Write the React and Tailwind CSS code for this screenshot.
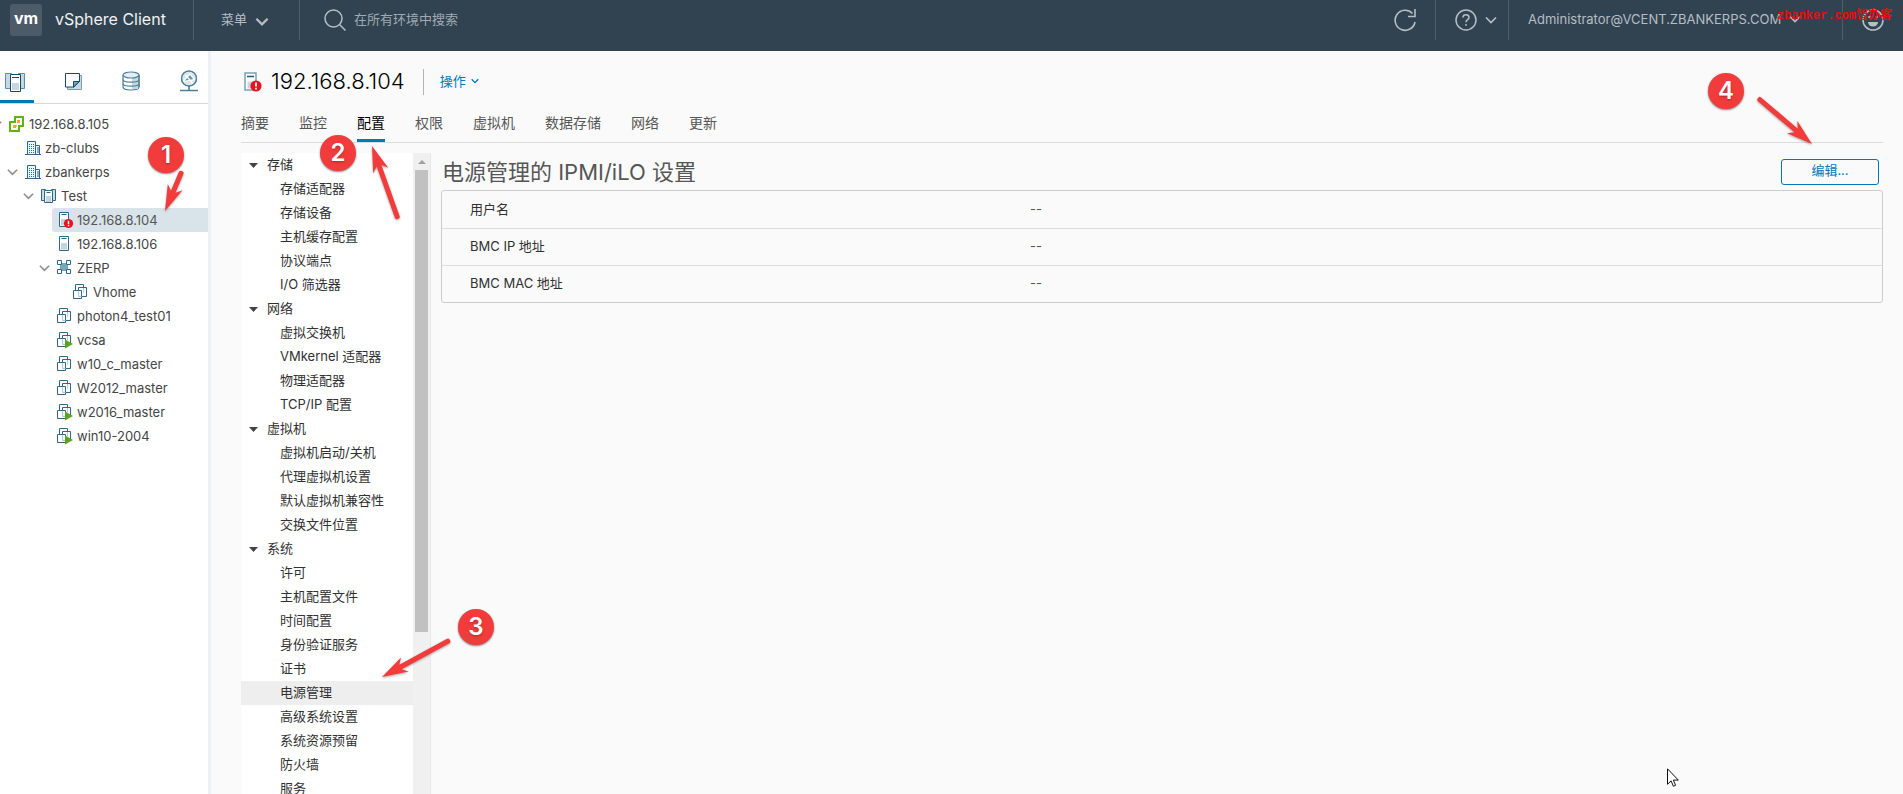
import { useState } from 'react'

const tree = [
  { name: '192.168.8.105', depth: 0, icon: 'vcenter', open: true },
  { name: 'zb-clubs', depth: 1, icon: 'datacenter' },
  { name: 'zbankerps', depth: 1, icon: 'datacenter', open: true },
  { name: 'Test', depth: 2, icon: 'cluster', open: true },
  { name: '192.168.8.104', depth: 3, icon: 'hostError' },
  { name: '192.168.8.106', depth: 3, icon: 'host' },
  { name: 'ZERP', depth: 3, icon: 'pool', open: true },
  { name: 'Vhome', depth: 4, icon: 'vm' },
  { name: 'photon4_test01', depth: 3, icon: 'vm' },
  { name: 'vcsa', depth: 3, icon: 'vmOn' },
  { name: 'w10_c_master', depth: 3, icon: 'vm' },
  { name: 'W2012_master', depth: 3, icon: 'vm' },
  { name: 'w2016_master', depth: 3, icon: 'vmOn' },
  { name: 'win10-2004', depth: 3, icon: 'vmOn' },
]

const tabs = ['摘要', '监控', '配置', '权限', '虚拟机', '数据存储', '网络', '更新']

const settings = [
  { title: '存储', items: ['存储适配器', '存储设备', '主机缓存配置', '协议端点', 'I/O 筛选器'] },
  { title: '网络', items: ['虚拟交换机', 'VMkernel 适配器', '物理适配器', 'TCP/IP 配置'] },
  { title: '虚拟机', items: ['虚拟机启动/关机', '代理虚拟机设置', '默认虚拟机兼容性', '交换文件位置'] },
  {
    title: '系统',
    items: ['许可', '主机配置文件', '时间配置', '身份验证服务', '证书', '电源管理', '高级系统设置', '系统资源预留', '防火墙', '服务'],
  },
]

const ipmiRows = ['用户名', 'BMC IP 地址', 'BMC MAC 地址']

function Chevron({ className }) {
  return (
    <svg viewBox="0 0 12 8" className={className} fill="none" stroke="currentColor" strokeWidth="1.7">
      <path d="M1 1.5 6 6.5 11 1.5" />
    </svg>
  )
}

function TreeIcon({ name }) {
  const common = { viewBox: '0 0 16 16', className: 'size-4 shrink-0 overflow-visible', fill: 'none', stroke: '#2d6a8a' }

  if (name === 'vcenter') {
    return (
      <svg {...common} strokeWidth="2" stroke="#62b312">
        <path d="M6 1h8v9h-4v5H1V6h5z" fill="#fff" />
        <path d="M6 5v1.500M6 9v1h1.500M9 10h1.500" />
        <path d="M8 4h3v3H8zM4 9h3v3H4z" fill="#f9a12e" stroke="none" />
      </svg>
    )
  }
  if (name === 'datacenter') {
    return (
      <svg {...common}>
        <path d="M2.500 14.500v-13h8v13M10.500 5.500h4v9M0 14.500h16" fill="#eef4f7" />
        <path d="M4.500 4v9M6.500 4v9M8.500 4v9" strokeDasharray="1 1" />
        <path d="M12 8h2M12 10h2M12 12h2" />
      </svg>
    )
  }
  if (name === 'cluster') {
    return (
      <svg {...common}>
        <path d="M.5 1.500h4v11h-4zM10.500 1.500h4v11h-4z" fill="#cbdbe3" />
        <path d="M3.500 2.500h8v12h-8z" fill="#fff" />
        <path d="M5.500 4.500h4" />
        <path d="M5 8h5v6H5z" fill="#c3d5de" stroke="none" />
      </svg>
    )
  }
  if (name === 'host' || name === 'hostError') {
    return (
      <svg {...common}>
        <path d="M2.500.5h9v14h-9z" fill="#fff" />
        <path d="M4.500 2.500h5" />
        <path d="M4 7h6v6.500H4z" fill="#c3d5de" stroke="none" />
        {name === 'hostError' && (
          <>
            <circle cx="11.500" cy="11.500" r="4.600" fill="#e7131e" stroke="none" />
            <path d="M11.500 8.800v3.400M11.500 13v1.300" stroke="#fff" strokeWidth="1.400" />
          </>
        )}
      </svg>
    )
  }
  if (name === 'pool') {
    return (
      <svg {...common}>
        <path d="M3 3h8v8H3z" fill="#7fa5b9" stroke="none" />
        <path d="M.5.5h4v4h-4zM9.500.5h4v4h-4zM.5 9.500h4v4h-4zM9.500 9.500h4v4h-4z" fill="#fff" />
      </svg>
    )
  }
  return (
    <svg {...common}>
      <path d="M2.500.5h8v8h-8z" fill="#fff" />
      <path d="M5.500 3.500h8v9h-8z" fill="#fff" />
      <path d="M.5 6.500h8v8h-8z" fill="#fff" />
      <path d="M5.500 7.500v5h3M10.500 4v4.500" stroke="#b4cad5" />
      {name === 'vmOn' && <path d="M8 7.500l8 4.500-8 4.500z" fill="#5aa220" stroke="none" />}
    </svg>
  )
}

function Header() {
  return (
    <header className="flex h-[51px] shrink-0 items-start bg-[#314351] text-[#b6bec4]">
      <div className="flex h-10 w-[194px] items-center gap-[13px] border-r border-[#4e5e6a] pl-[10px]">
        <span className="flex size-8 items-center justify-center rounded-[3px] bg-[#4d5a67] pb-1 text-base font-bold text-white">vm</span>
        <span className="pb-[2px] text-base whitespace-nowrap text-[#f0f2f3]">vSphere Client</span>
      </div>
      <button type="button" className="flex h-10 w-[106px] items-center gap-2 border-r border-[#4e5e6a] pb-[2px] pl-[27px]">
        菜单
        <Chevron className="mt-1 h-[9px] w-[14px] stroke-2" />
      </button>
      <div className="flex h-10 flex-1 items-center gap-2 pl-6">
        <label htmlFor="search" aria-label="搜索">
          <svg viewBox="0 0 22 22" className="size-[22px]" fill="none" stroke="currentColor" strokeWidth="1.500">
            <circle cx="9.500" cy="9.500" r="8.500" />
            <path d="M15.500 15.500l6 6" />
          </svg>
        </label>
        <input id="search" type="text" placeholder="在所有环境中搜索" className="w-60 bg-transparent pb-[2px] outline-none placeholder:text-[#a0aab1]" />
      </div>
      <button type="button" aria-label="刷新" className="flex h-10 w-[42px] items-center border-r border-[#4e5e6a]">
        <svg viewBox="0 0 22 24" className="h-6 w-[22px]" fill="none" stroke="currentColor" strokeWidth="1.600">
          <path d="M18.500 5.500A10 10 0 1 0 21 14" />
          <path d="M21 1v7.500h-7" />
        </svg>
      </button>
      <button type="button" aria-label="帮助" className="flex h-10 w-[73px] items-center gap-2 border-r border-[#4e5e6a] pl-[19px]">
        <svg viewBox="0 0 22 22" className="size-[22px]" fill="none" stroke="currentColor" strokeWidth="1.500">
          <circle cx="11" cy="11" r="10" />
          <path d="M8 8.500C8 6.800 9.300 5.800 11 5.800s3 1 3 2.600c0 2.200-3 2.300-3 4.800M11 15v1.800" />
        </svg>
        <Chevron className="h-2 w-3" />
      </button>
      <button type="button" className="flex h-10 w-[334px] items-center gap-2 border-r border-[#4e5e6a] pb-[2px] pl-[19px]">
        Administrator@VCENT.ZBANKERPS.COM
        <Chevron className="h-2 w-3" />
      </button>
      <button type="button" aria-label="反馈" className="flex h-10 w-[60px] items-center pl-[19px]">
        <svg viewBox="0 0 22 22" className="size-[22px]" fill="none" stroke="currentColor" strokeWidth="1.600">
          <circle cx="11" cy="11" r="10" />
          <path d="M6 13h10a5 4.500 0 0 1-10 0z" fill="currentColor" stroke="none" />
          <circle cx="7.500" cy="8" r="1.300" fill="currentColor" stroke="none" />
          <circle cx="14.500" cy="8" r="1.300" fill="currentColor" stroke="none" />
        </svg>
      </button>
    </header>
  )
}

function InventoryTabs() {
  return (
    <div className="flex h-[53px] shrink-0 border-b border-[#d8d8d8]">
      <button type="button" aria-label="主机和集群" className="flex w-[34px] items-center border-b-3 border-[#0079b8] pt-3 pl-[5px]">
        <svg viewBox="0 0 20 20" className="size-5" fill="none" stroke="#0c4f6f">
          <path d="M.5 1.500h6v15h-6zM13.500 1.500h6v15h-6z" fill="#c8d8e0" stroke="#5f8ea5" />
          <path d="M5.500 2.500h10v17h-10z" fill="#fff" />
          <path d="M7 5.500h7" />
          <path d="M7 11h7v7H7z" fill="#c8d8e0" stroke="none" />
        </svg>
      </button>
      <button type="button" aria-label="虚拟机和模板" className="flex w-[58px] items-center pt-2 pl-[30px]">
        <svg viewBox="0 0 18 18" className="size-[18px] shrink-0" fill="none" stroke="#0c4f6f">
          <path d="M3.500 3.500h14v14h-14z" fill="#c8d8e0" stroke="#7ba1b4" />
          <path d="M1.500 1.500h14v8l-5.500 5.500H1.500z" fill="#fff" />
          <path d="M9.500 15v-5.500h6z" fill="#7ba1b4" />
        </svg>
      </button>
      <button type="button" aria-label="存储" className="flex w-[58px] items-center pt-2 pl-[30px]">
        <svg viewBox="0 0 18 20" className="h-5 w-[18px] shrink-0" fill="#fff" stroke="#4d8099" strokeWidth="1.200">
          <path d="M1 4v12c0 4 16 4 16 0V4" />
          <path d="M10 5h6v13h-6z" fill="#c8d8e0" stroke="none" />
          <ellipse cx="9" cy="4" rx="8" ry="3" fill="#e4edf1" />
          <path d="M1 8.500c0 3.500 16 3.500 16 0M1 12.500c0 3.500 16 3.500 16 0M17 4v12" fill="none" />
        </svg>
      </button>
      <button type="button" aria-label="网络" className="flex w-[58px] items-center pt-2 pl-[30px]">
        <svg viewBox="0 0 18 22" className="h-[22px] w-[18px] shrink-0" fill="none" stroke="#4d8099" strokeWidth="1.200">
          <circle cx="9" cy="8.500" r="7.500" fill="#dbe7ed" />
          <path d="M10 4l4.500 5.500L3 11.500z" fill="#6b98ad" stroke="none" />
          <path d="M3 11.500L10 4l4.500 5.500-11.500 2M5.500 5l7 8" stroke="#fff" />
          <circle cx="9" cy="8.500" r="7.500" />
          <path d="M9 16v4M0 20.500h18" strokeWidth="1.600" />
        </svg>
      </button>
    </div>
  )
}

function Sidebar({ selected, onSelect }) {
  return (
    <aside className="flex w-[211px] shrink-0 flex-col overflow-hidden border-r-3 border-[#f0f1f4] bg-white">
      <InventoryTabs />
      <ul className="pt-2">
        {tree.map((node) => (
          <li key={node.name} className="flex h-6">
            <span className="flex shrink-0 items-center justify-end pr-[2px] text-[#8c8c8c]" style={{ width: 4 + node.depth * 16 }}>
              {node.open && <Chevron className="h-2 w-[11px] shrink-0" />}
            </span>
            <button
              type="button"
              onClick={() => onSelect(node.name)}
              className={`flex flex-1 items-center gap-1 rounded-l-[3px] pl-[5px] text-left ${node.name === selected ? 'bg-[#d9e4ea] text-[#565656]' : 'text-[#454545]'}`}
            >
              <TreeIcon name={node.icon} />
              <span className="pb-px">{node.name}</span>
            </button>
          </li>
        ))}
      </ul>
    </aside>
  )
}

function SettingsNav() {
  const [current, setCurrent] = useState('电源管理')

  return (
    <div className="flex w-[190px] shrink-0 overflow-hidden border-r border-[#e8e8e8]">
      <nav className="flex-1 bg-white text-[#313131]">
        {settings.map((group) => (
          <section key={group.title}>
            <h3 className="flex h-6 items-center gap-[9px] pl-2">
              <svg viewBox="0 0 9 5" className="h-[5px] w-[9px]" fill="#454545">
                <path d="M0 0h9L4.500 5z" />
              </svg>
              <span className="pb-[3px]">{group.title}</span>
            </h3>
            {group.items.map((item) => (
              <button
                key={item}
                type="button"
                onClick={() => setCurrent(item)}
                className={`flex h-6 w-full items-center pb-[3px] pl-[39px] whitespace-nowrap ${item === current ? 'bg-[#eee]' : ''}`}
              >
                {item}
              </button>
            ))}
          </section>
        ))}
      </nav>
      <div className="flex w-[17px] flex-col items-center bg-[#f0f0f0] px-[2px]">
        <svg viewBox="0 0 8 4" className="mt-[7px] mb-[6px] h-1 w-2 shrink-0" fill="#a0a0a0">
          <path d="M4 0l4 4H0z" />
        </svg>
        <div className="h-[72%] w-full bg-[#c1c1c1]" />
      </div>
    </div>
  )
}

function PowerManagement() {
  return (
    <section className="flex-1 pt-[6px] pl-[10px]">
      <div className="flex h-[31px] items-start justify-between pr-1">
        <h2 className="pl-px text-[22px] leading-[26px] text-[#565656]">电源管理的 IPMI/iLO 设置</h2>
        <button type="button" className="h-[26px] w-[98px] rounded-[3px] border border-[#0079b8] pb-1 leading-5 text-[#0079b8]">
          编辑...
        </button>
      </div>
      <table className="w-full table-fixed border-separate border-spacing-0 rounded-[3px] border border-[#ccc]">
        <tbody>
          {ipmiRows.map((label, i) => (
            <tr key={label} className="h-[37px]">
              <th scope="row" className={`w-[588px] pb-[2px] pl-7 text-left font-normal text-[#313131] ${i ? 'border-t border-[#ddd]' : ''}`}>
                {label}
              </th>
              <td className={`pb-[2px] text-[#565656] ${i ? 'border-t border-[#ddd]' : ''}`}>--</td>
            </tr>
          ))}
        </tbody>
      </table>
    </section>
  )
}

function Marker({ number, className }) {
  return (
    <span
      className={`absolute flex size-9 items-center justify-center rounded-full bg-[#f23c3c] text-2xl font-semibold text-white shadow-[0_1px_2px_rgba(0,0,0,0.5)] text-shadow-md ${className}`}
    >
      {number}
    </span>
  )
}

// An arrow inside a box of w x h, from (x1, y1) to its tip at (x2, y2)
function Arrow({ w, h, x1, y1, x2, y2, className }) {
  const length = Math.hypot(x2 - x1, y2 - y1)
  const angle = (Math.atan2(y2 - y1, x2 - x1) * 180) / Math.PI
  return (
    <svg width={w} height={h} className={`pointer-events-none absolute overflow-visible drop-shadow-[0_1px_1px_rgba(0,0,0,0.35)] ${className}`}>
      <g transform={`translate(${x2} ${y2}) rotate(${angle})`} fill="#f23c3c">
        <path d={`M0 0L-26 8L-21 2.500H${2 - length}Q${-length} 2.500 ${-length} 0T${2 - length} -2.500H-21L-26 -8z`} />
      </g>
    </svg>
  )
}

function App() {
  const [selected, setSelected] = useState('192.168.8.104')
  const [tab, setTab] = useState('配置')

  return (
    <div className="relative flex h-screen flex-col overflow-hidden bg-[#fafafa] font-['Inter','Noto_Sans_CJK_SC',sans-serif] text-[13px] leading-6">
      <Header />
      <div className="flex min-h-0 flex-1">
        <Sidebar selected={selected} onSelect={setSelected} />
        <main className="flex min-w-0 flex-1 flex-col pr-5 pl-[30px]">
          <div className="flex h-[62px] shrink-0 items-center pl-[3px]">
            <svg viewBox="0 0 18 20" className="h-5 w-[18px]" fill="none" stroke="#7ba1b4" strokeWidth="1.500">
              <path d="M1 1h11v17H1z" fill="#fff" />
              <path d="M3 4.500h7" stroke="#1b5b78" />
              <path d="M3.500 9.500h7v7h-7z" fill="#c8d8e0" stroke="none" />
              <circle cx="12" cy="14" r="5.600" fill="#e7131e" stroke="none" />
              <path d="M12 10.500v4M12 15.800v1.600" stroke="#fff" strokeWidth="1.800" />
            </svg>
            <h1 className="border-r border-[#b5b5b5] pr-[18px] pb-[2px] pl-[9px] text-[22px] leading-6 font-light text-black">{selected}</h1>
            <button type="button" className="flex items-center gap-[5px] pb-[2px] pl-4 text-[#0079b8]">
              操作
              <Chevron className="h-[6px] w-2 stroke-2" />
            </button>
          </div>
          <div className="flex h-[30px] shrink-0 gap-[30px] border-b border-[#ddd] text-sm">
            {tabs.map((name) => (
              <button
                key={name}
                type="button"
                onClick={() => setTab(name)}
                className={`h-[29px] border-b-3 pb-[10px] leading-5 ${name === tab ? 'border-[#0079b8] text-black' : 'border-transparent text-[#565656]'}`}
              >
                {name}
              </button>
            ))}
          </div>
          <div className="flex min-h-0 flex-1 pt-[10px]">
            <SettingsNav />
            <PowerManagement />
          </div>
        </main>
      </div>

      <span className="absolute top-[6px] right-[11px] font-['Liberation_Mono','Noto_Sans_CJK_SC',monospace] text-xs leading-5 font-bold whitespace-nowrap text-[#f00808]">
        zbanker.com智办客
      </span>
      <Marker number="1" className="top-[137px] left-[148px]" />
      <Arrow w={20} h={44} x1={18} y1={1} x2={1} y2={41} className="top-[170px] left-[164px]" />
      <Marker number="2" className="top-[135px] left-[320px]" />
      <Arrow w={30} h={76} x1={27} y1={74} x2={1} y2={1} className="top-[145px] left-[371px]" />
      <Marker number="3" className="top-[609px] left-[458px]" />
      <Arrow w={70} h={40} x1={69} y1={1} x2={1} y2={38} className="top-[639px] left-[381px]" />
      <Marker number="4" className="top-[73px] right-[159px]" />
      <Arrow w={56} h={48} x1={1} y1={1} x2={55} y2={47} className="top-[97px] right-[90px]" />
      <svg viewBox="0 0 12 19" className="pointer-events-none absolute right-[224px] bottom-[7px] h-[19px] w-3" fill="#fff" stroke="#111" strokeWidth="1">
        <path d="M.5.8v15.500l3.600-3.400 2.300 5.400 2.200-1-2.300-5.200h5z" />
      </svg>
    </div>
  )
}

export default App
